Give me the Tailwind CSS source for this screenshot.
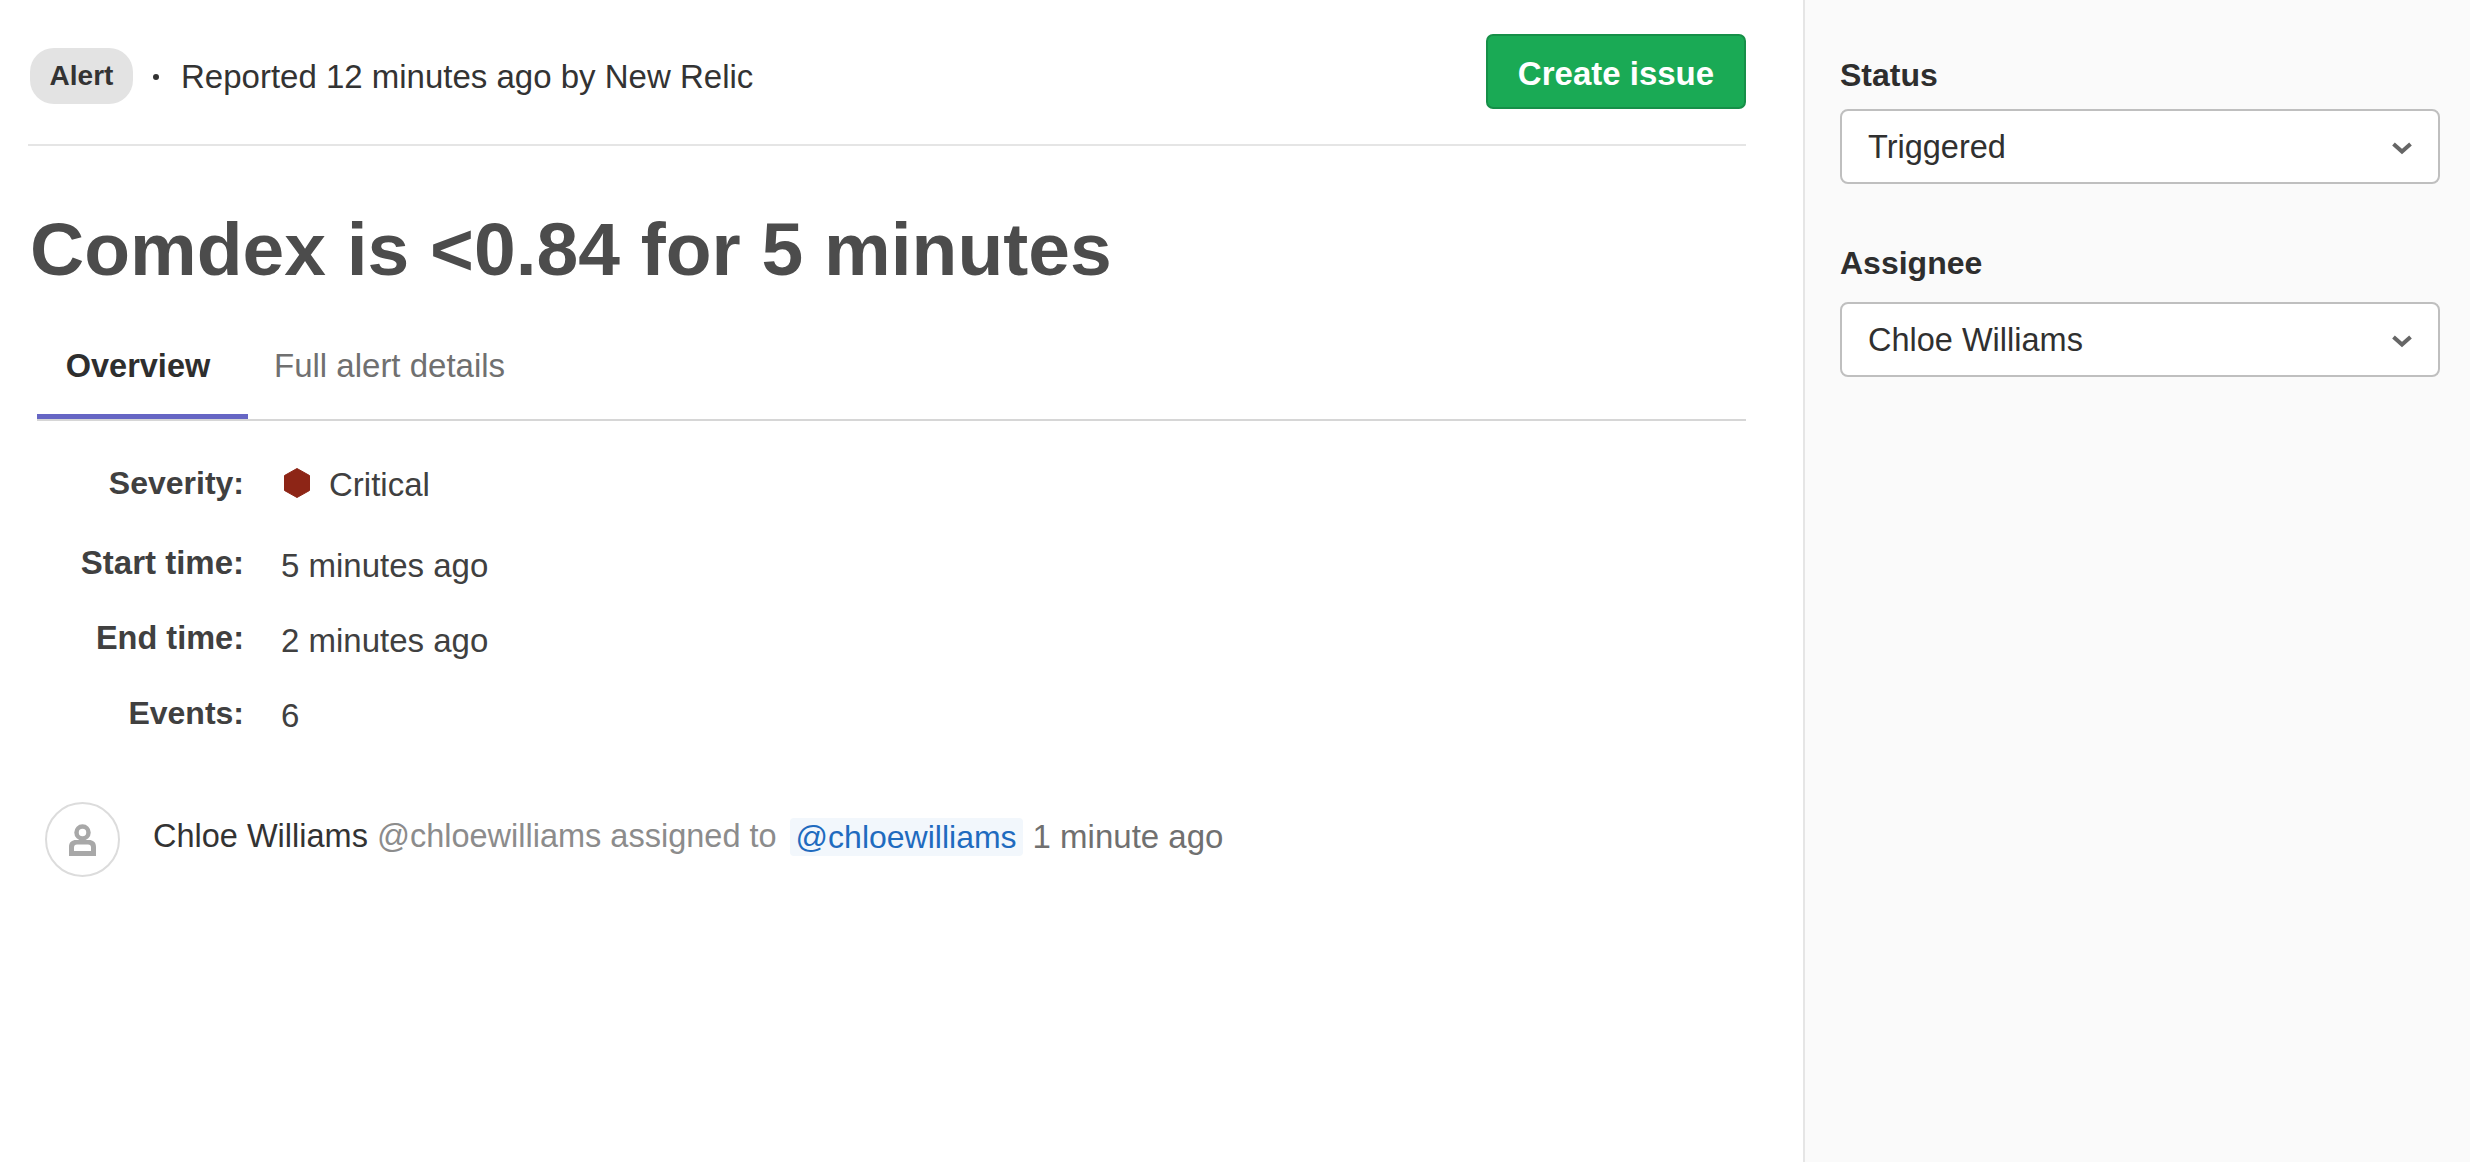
<!DOCTYPE html>
<html lang="en">
  <head>
    <meta charset="UTF-8" />
    <title>Alert details</title>
    <script src="https://cdn.jsdelivr.net/npm/@tailwindcss/browser@4"></script>
  </head>
  <body class="bg-white font-['Liberation_Sans',Arial,sans-serif] text-[#2e2e2e] h-screen w-screen overflow-hidden flex">
    <main class="w-[1803px] h-full pl-[28px] pr-[57px] shrink-0">
      <header class="h-[146px] pt-[34px] border-b-2 border-[#e5e5e5] flex justify-between items-start">
        <div class="flex items-center h-[70px] pl-[2px] pt-[14px]">
          <span class="w-[103px] h-[56px] rounded-[24px] bg-[#e3e3e3] flex items-center justify-center font-bold text-[28px] text-[#333]">Alert</span>
          <span class="ml-[20px] mt-[2px] w-[6px] h-[6px] rounded-full bg-[#333]"></span>
          <span class="ml-[22px] pt-[2px] text-[33px] text-[#333]">Reported 12 minutes ago by New Relic</span>
        </div>
        <button class="w-[260px] h-[75px] pt-[5px] rounded-[7px] bg-[#1aaa55] border-2 border-[#168f48] text-white font-bold text-[33px]">Create issue</button>
      </header>

      <h1 class="mt-[58px] ml-[2px] h-[90px] leading-[90px] font-bold text-[#4c4c4c] text-[75px]">Comdex is &lt;0.84 for 5 minutes</h1>

      <nav class="mt-[10px] ml-[9px] h-[117px] flex border-b-2 border-[#d6d6d6]">
        <a class="w-[211px] pt-[14px] pr-[9px] border-b-[5px] border-[#6666c4] flex items-center justify-center font-bold text-[32.5px]">Overview</a>
        <a class="ml-[26px] pt-[14px] pb-[5px] flex items-center text-[#707070] text-[33px]">Full alert details</a>
      </nav>

      <section class="mt-[44px] text-[33px] text-[#404040]">
        <div class="flex h-[36px] items-center">
          <span class="w-[216px] text-right font-bold text-[32px]">Severity:</span>
          <span class="ml-[39px] flex items-center pt-[4px]">
            <svg width="28" height="30" viewBox="0 0 28 30" class="-mt-[4px]"><path d="M14 0.5 L26.5 7.5 L26.5 22.5 L14 29.5 L1.5 22.5 L1.5 7.5 Z" fill="#8d2516" stroke="#8d2516" stroke-linejoin="round"/></svg>
            <span class="ml-[18px]">Critical</span>
          </span>
        </div>
        <div class="flex h-[36px] items-center mt-[44px]">
          <span class="w-[216px] text-right font-bold text-[33px]">Start time:</span>
          <span class="ml-[37px] pt-[6px]">5 minutes ago</span>
        </div>
        <div class="flex h-[36px] items-center mt-[39px]">
          <span class="w-[216px] text-right font-bold text-[32.5px]">End time:</span>
          <span class="ml-[37px] pt-[6px]">2 minutes ago</span>
        </div>
        <div class="flex h-[36px] items-center mt-[39px]">
          <span class="w-[216px] text-right font-bold text-[32px]">Events:</span>
          <span class="ml-[37px] pt-[6px]">6</span>
        </div>
      </section>

      <section class="mt-[71px] ml-[17px] flex items-center text-[33px]">
        <div class="w-[75px] h-[75px] rounded-full border-2 border-[#dcdcdc] flex items-center justify-center">
          <svg width="27" height="32" viewBox="0 0 27 32">
            <circle cx="13.5" cy="8.5" r="6" fill="none" stroke="#a8a8a8" stroke-width="4.5"/>
            <path fill-rule="evenodd" fill="#a8a8a8" d="M0 32 V23 C0 18 3 16 7 16 H20 C24 16 27 18 27 23 V32 Z M5 27 H22 V23.5 C22 21.5 21 20.5 19 20.5 H8 C6 20.5 5 21.5 5 23.5 Z"/>
          </svg>
        </div>
        <div class="ml-[33px] flex items-center -mt-[6px]">
          <span class="text-[#333] text-[32.5px]">Chloe Williams</span>
          <span class="ml-[9px] text-[#8c8c8c] text-[32.5px]">@chloewilliams assigned to</span>
          <span class="ml-[13px] h-[38px] px-[6px] rounded-[4px] bg-[#f2f7fc] text-[#1f6bbf] text-[32px] flex items-center">@chloewilliams</span>
          <span class="ml-[10px] text-[#707070]">1 minute ago</span>
        </div>
      </section>
    </main>

    <aside class="flex-1 h-full bg-[#fafafa] border-l-2 border-[#e5e5e5] pl-[35px] pr-[30px] pt-[56px]">
      <label class="block h-[38px] leading-[38px] font-bold text-[32px]">Status</label>
      <div class="mt-[15px] h-[75px] pt-[2px] rounded-[8px] border-2 border-[#bfbfbf] bg-white pl-[26px] pr-[25px] flex items-center justify-between text-[32.5px] text-[#303030]">
        <span>Triggered</span>
        <svg width="22" height="14" viewBox="0 0 22 14" fill="none"><path d="M2.5 3 L11 10.5 L19.5 3" stroke="#666" stroke-width="4"/></svg>
      </div>
      <label class="mt-[60px] block h-[38px] leading-[38px] font-bold text-[32px]">Assignee</label>
      <div class="mt-[20px] h-[75px] pt-[2px] rounded-[8px] border-2 border-[#bfbfbf] bg-white pl-[26px] pr-[25px] flex items-center justify-between text-[32.5px] text-[#303030]">
        <span>Chloe Williams</span>
        <svg width="22" height="14" viewBox="0 0 22 14" fill="none"><path d="M2.5 3 L11 10.5 L19.5 3" stroke="#666" stroke-width="4"/></svg>
      </div>
    </aside>
  </body>
</html>
